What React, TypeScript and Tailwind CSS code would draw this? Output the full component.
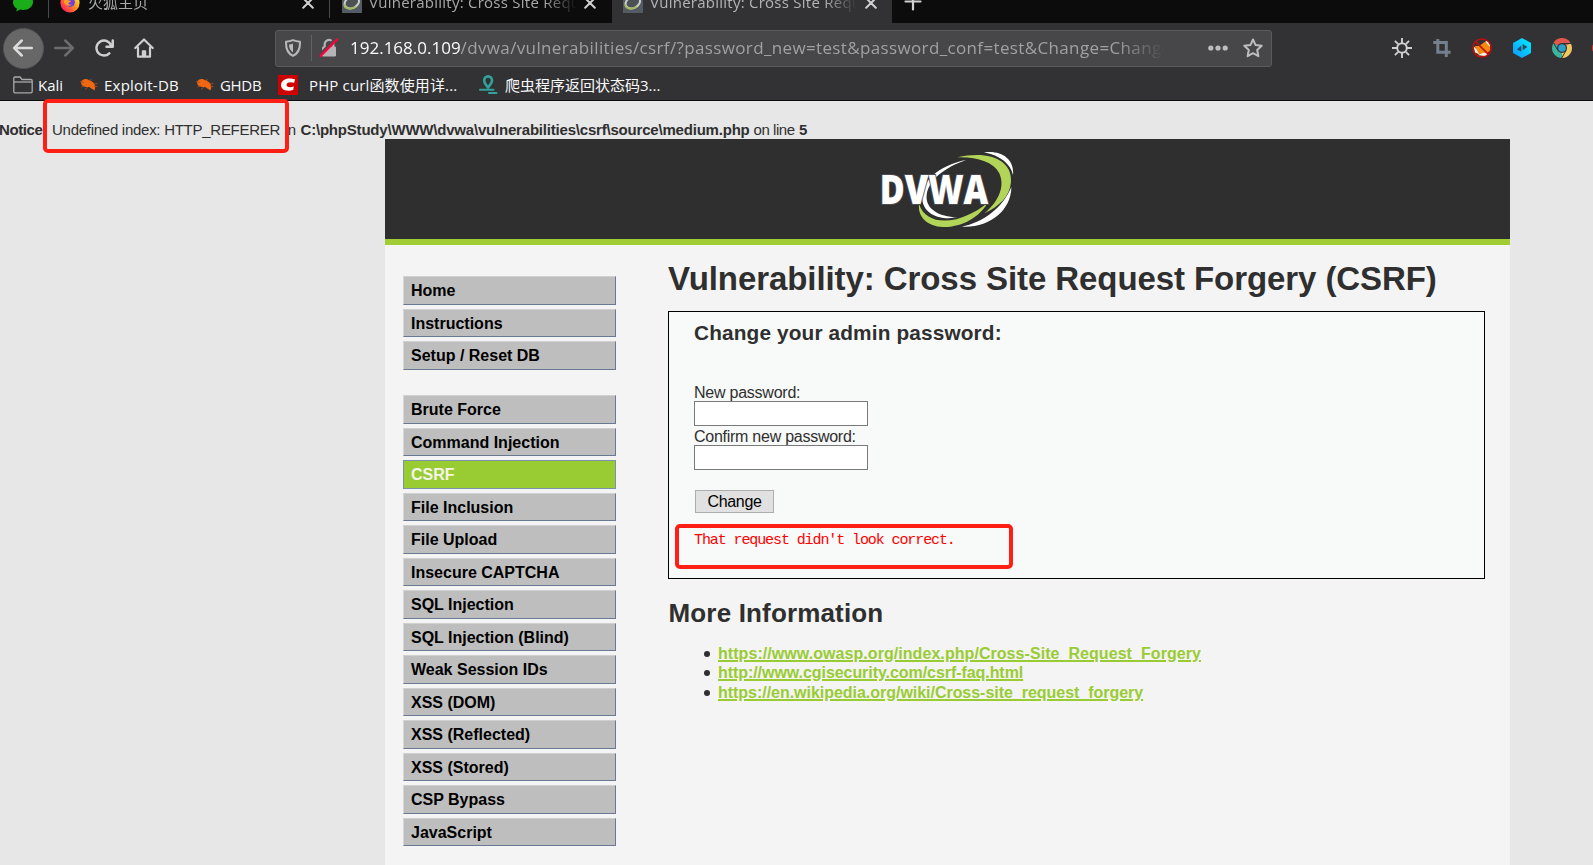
import type { ReactNode } from "react";

const BACK =
  "M15 7H3.414l4.293-4.293a1 1 0 0 0-1.414-1.414l-6 6a1 1 0 0 0 0 1.414l6 6a1 1 0 0 0 1.414-1.414L3.414 9H15a1 1 0 0 0 0-2z";
const RELOAD =
  "M15 1a1 1 0 0 0-1 1v2.418A6.995 6.995 0 1 0 8 15a6.954 6.954 0 0 0 4.95-2.05 1 1 0 0 0-1.414-1.414A5.019 5.019 0 1 1 12.549 6H10a1 1 0 0 0 0 2h5a1 1 0 0 0 1-1V2a1 1 0 0 0-1-1z";

function WeChatIcon() {
  return (
    <svg width="20" height="20" viewBox="0 0 20 20" className="shrink-0">
      <path d="M10 1c5.500 0 10 3.500 10 8s-4.500 8-10 8c-1 0-2-.1-2.900-.4L3.300 18.600l.6-3C1.500 14.200 0 11.900 0 9.200 0 4.700 4.500 1 10 1z" fill="#1aad19" />
    </svg>
  );
}

function FirefoxIcon() {
  return (
    <svg width="20" height="20" viewBox="0 0 20 20" className="shrink-0">
      <defs>
        <linearGradient id="fx" x1="0.9" y1="0.2" x2="0.15" y2="0.9">
          <stop offset="0" stopColor="#ffe226" />
          <stop offset="0.45" stopColor="#ff8a1f" />
          <stop offset="1" stopColor="#ff1f5e" />
        </linearGradient>
      </defs>
      <circle cx="10" cy="10" r="9.600" fill="url(#fx)" />
      <circle cx="10.300" cy="9.300" r="4.600" fill="#6f3fe4" />
      <path d="M4 5c2 0 3.600 1 4.300 2.200 1.200.3 2 .2 2.900.8-.6 1.300-1.900 1.400-2.900 1.900.3 1.500 1.800 2.100 3.700 1.800-2 1.800-6.500 1.300-8-2z" fill="#ff9a22" />
    </svg>
  );
}

function DvwaFavicon() {
  return (
    <svg width="20" height="20" viewBox="0 0 20 20" className="shrink-0">
      <rect width="20" height="20" fill="#545b63" />
      <ellipse cx="10" cy="9.500" rx="7.500" ry="5.500" transform="rotate(-25 10 10)" fill="#4b5154" stroke="#c9cfc9" strokeWidth="2" />
      <path d="M2.300 11.500c.2 5 7 5 11.500 2" fill="none" stroke="#a3b95c" strokeWidth="1.800" />
    </svg>
  );
}

function CloseIcon() {
  return (
    <svg width="12" height="12" viewBox="0 0 12 12" className="shrink-0" stroke="#d0d0d1" strokeWidth="2" strokeLinecap="round">
      <path d="M1.200 1.200l9.600 9.600M10.800 1.200L1.200 10.800" />
    </svg>
  );
}

function TabTitle({ children, className }: { children: ReactNode; className: string }) {
  return (
    <span
      className={
        "mb-[2px] overflow-hidden whitespace-nowrap text-[15px] leading-[22px] [mask-image:linear-gradient(to_right,black_84%,transparent)] " +
        className
      }
    >
      {children}
    </span>
  );
}

function TabBar() {
  return (
    <div className="flex h-[23px] items-end overflow-hidden bg-[#0c0c0c]">
      <div className="flex h-[41px] w-[48px] shrink-0 items-center pl-[13px]">
        <WeChatIcon />
      </div>
      <div className="mb-[5px] h-[36px] w-px shrink-0 bg-[#4a4a4c]" />
      <div className="flex h-[41px] w-[280px] shrink-0 items-center pl-[11px]">
        <FirefoxIcon />
        <TabTitle className="ml-2 w-[214px] text-[#a9a9ab]">火狐主页</TabTitle>
        <CloseIcon />
      </div>
      <div className="mb-[5px] h-[36px] w-px shrink-0 bg-[#4a4a4c]" />
      <div className="flex h-[41px] w-[282px] shrink-0 items-center pl-3">
        <DvwaFavicon />
        <TabTitle className="ml-[7px] mr-[7px] w-[208px] tracking-[0.25px] text-[#a9a9ab]">
          Vulnerability: Cross Site Request Forgery
        </TabTitle>
        <CloseIcon />
      </div>
      <div className="flex h-[41px] w-[280px] shrink-0 items-center bg-[#323234] pl-[11px]">
        <DvwaFavicon />
        <TabTitle className="ml-[7px] mr-[8px] w-[207px] tracking-[0.25px] text-[#b4b4b6]">
          Vulnerability: Cross Site Request Forgery
        </TabTitle>
        <CloseIcon />
      </div>
      <div className="flex h-[41px] items-center pl-3">
        <svg width="18" height="18" viewBox="0 0 18 18" stroke="#d0d0d1" strokeWidth="2.200" strokeLinecap="round">
          <path d="M9 1v14.500M1.500 7.500h15" />
        </svg>
      </div>
    </div>
  );
}

function Toolbar() {
  return (
    <div className="flex h-[50px] items-center">
      <div className="ml-[3px] flex h-[41px] w-[41px] shrink-0 items-center justify-center rounded-full border border-[#555557] bg-[#676768]">
        <svg width="20" height="20" viewBox="0 0 16 16" fill="#dcdcdc" className="-translate-x-px">
          <path d={BACK} />
        </svg>
      </div>
      <svg width="20" height="20" viewBox="0 0 16 16" fill="#6c6c6e" className="ml-[10px] shrink-0 -scale-x-100">
        <path d={BACK} />
      </svg>
      <svg width="20" height="20" viewBox="0 0 16 16" fill="#cfcfd0" className="ml-5 shrink-0">
        <path d={RELOAD} />
      </svg>
      <svg width="20" height="20" viewBox="0 0 20 20" fill="none" stroke="#cfcfd0" strokeWidth="2.200" strokeLinejoin="round" strokeLinecap="round" className="ml-5 shrink-0">
        <path d="M1.300 10L10 1.500 18.700 10M4 9.500v9.200h12V9.500" />
        <path d="M10 18.500v-5M8.600 18.500v-5.400h2.800v5.400" strokeWidth="1.600" />
      </svg>
      <div className="ml-[121px] flex h-[37px] w-[997px] shrink-0 items-center rounded-[3px] border border-[#5a5a5c] bg-[#474749]">
        <svg width="18" height="18" viewBox="0 0 18 18" fill="none" className="ml-2 shrink-0">
          <path d="M9 1.200c2.200 1 4.500 1.400 7 1.500.2 6.500-1.200 11.500-7 14.200C3.200 14.200 1.800 9.200 2 2.700c2.500-.1 4.800-.5 7-1.500z" stroke="#b9b9bb" strokeWidth="2" strokeLinejoin="round" />
          <path d="M9 4.500v9c-3-2-4-4.500-4-7.900 1.500-.2 2.700-.5 4-1.100z" fill="#b9b9bb" />
        </svg>
        <span className="ml-[9px] h-[26px] w-px shrink-0 bg-[#626264]" />
        <svg width="20" height="20" viewBox="0 0 20 20" className="ml-[7px] shrink-0">
          <path d="M5.700 9V6.200a4.300 4.300 0 0 1 8.600 0V9" fill="none" stroke="#b4b4b6" strokeWidth="2.200" />
          <rect x="3" y="8.500" width="14" height="10" rx="1.200" fill="#b4b4b6" />
          <path d="M.5 17L17 .5" stroke="#474749" strokeWidth="3" />
          <path d="M1.500 18L18 1.500" stroke="#ff0039" strokeWidth="2.400" strokeLinecap="round" />
        </svg>
        <div className="ml-[11px] flex w-[815px] shrink-0 overflow-hidden whitespace-nowrap text-[17px] leading-6 [mask-image:linear-gradient(to_right,black_94%,transparent)]">
          <span className="text-[#f9f9fa]">192.168.0.109</span>
          <span className="tracking-[0.36px] text-[#a1a1a3]">
            /dvwa/vulnerabilities/csrf/?password_new=test&amp;password_conf=test&amp;Change=Change
          </span>
        </div>
        <svg width="20" height="6" viewBox="0 0 20 6" fill="#bdbdbf" className="ml-[43px] shrink-0">
          <circle cx="2.800" cy="3" r="2.600" />
          <circle cx="10" cy="3" r="2.600" />
          <circle cx="17.200" cy="3" r="2.600" />
        </svg>
        <svg width="20" height="20" viewBox="0 0 20 20" fill="none" stroke="#bdbdbf" strokeWidth="2" strokeLinejoin="round" className="ml-[15px] shrink-0">
          <path d="M10 1.500l2.600 5.600 6.100.7-4.500 4.200 1.200 6.200L10 15.100l-5.400 3.100 1.200-6.200L1.300 7.800l6.100-.7z" />
        </svg>
      </div>
      <div className="ml-[120px] flex w-[201px] shrink-0 items-center gap-5 overflow-hidden">
        <svg width="20" height="20" viewBox="0 0 20 20" fill="none" stroke="#cfcfd0" className="shrink-0">
          <circle cx="10" cy="10" r="4.800" strokeWidth="2" />
          <path d="M10 0v5M10 15v5M0 10h5M15 10h5M2.900 2.900l3.300 3.300M13.800 13.800l3.300 3.300M17.100 2.900l-3.300 3.300M6.200 13.800l-3.300 3.300" strokeWidth="1.900" />
        </svg>
        <svg width="20" height="20" viewBox="0 0 20 20" fill="none" stroke="#75808e" strokeWidth="3" className="shrink-0">
          <path d="M5.800 1v13.300h12.800M1.300 4.500h13v14.500" />
        </svg>
        <svg width="20" height="20" viewBox="0 0 20 20" className="shrink-0">
          <path d="M3 8l4 0 5-3.500 3-2 3 3 0 7-5 4.500-6 .5-3-4z" fill="#f28a10" />
          <path d="M1.500 8l3.500 4 2 4-4-1.500zM13.500 3.500L16.500 3l1.500 5.500-2.200-1.800z" fill="#f4efe6" />
          <path d="M6.500 17l7 1.200 2.500-2.700-5-.8z" fill="#f4efe6" />
          <circle cx="10" cy="10" r="9.100" fill="none" stroke="#c40d0d" strokeWidth="1.500" />
          <path d="M3.600 3.600l12.800 12.800" stroke="#c40d0d" strokeWidth="1.500" />
        </svg>
        <svg width="20" height="20" viewBox="0 0 20 20" className="shrink-0">
          <defs>
            <linearGradient id="hex" x1="1" y1="0" x2="0" y2="1">
              <stop offset="0" stopColor="#00f0ff" />
              <stop offset="1" stopColor="#1296ff" />
            </linearGradient>
          </defs>
          <path d="M10 0l9 5v10l-9 5-9-5V5z" fill="url(#hex)" />
          <path d="M9.300 7.500v6L4.800 11.500zM10.700 6v6.200L15.400 9z" fill="#2b4a5c" />
        </svg>
        <svg width="20" height="20" viewBox="0 0 20 20" className="shrink-0">
          <path d="M10 10L1.340 5A10 10 0 0 1 18.660 5z" fill="#e2574c" />
          <path d="M10 10L18.660 5A10 10 0 0 1 10 20z" fill="#f0c75e" />
          <path d="M10 10L10 20A10 10 0 0 1 1.340 5z" fill="#3db39e" />
          <path d="M10 5.500h9M14 12.500L9.700 20M6 12.500L1.500 5" stroke="#323234" strokeWidth="1" />
          <circle cx="10" cy="10" r="5" fill="#323234" />
          <circle cx="10" cy="10" r="3.800" fill="#2ba0cc" />
        </svg>
        <span className="h-2 w-[3px] shrink-0 rounded-l-full bg-[#d9342b]" />
      </div>
    </div>
  );
}

function BugIcon() {
  return (
    <svg width="20" height="20" viewBox="0 0 20 20" className="shrink-0">
      <path d="M2 7C3.500 3.500 7.500 3 11 5.500c2 .8 4.500 2.500 5 4.800.5 2 .3 3.800-.8 5.200-1.500-1.800-3.200-1.800-5-3.500C7 12.300 4 11.500 2.500 9.500z" fill="#ef6712" />
      <path d="M1 6.500l4 1M5 11l-2.500 1M9 12l-3 2.500M11.500 6l.5-2M15 9l3.500-.5M15 11.500h3.500" stroke="#a3501f" strokeWidth="0.900" />
    </svg>
  );
}

function Bookmarks() {
  return (
    <div className="flex h-[28px] items-center whitespace-nowrap border-b border-[#0c0c0d] pb-[3px] text-[15px] leading-[22px] text-[#f9f9fa]">
      <svg width="20" height="18" viewBox="0 0 20 18" fill="none" stroke="#a9a9ab" strokeWidth="1.300" className="ml-[13px] shrink-0">
        <path d="M.8 15.500V2.200C.8 1.400 1.300 1 2 1h5l2 2.500h8.800c.8 0 1.400.5 1.400 1.300v10.700c0 .8-.6 1.400-1.400 1.400H2.200c-.8 0-1.400-.6-1.400-1.400z" />
        <path d="M1 6h18" />
      </svg>
      <span className="ml-[5px] w-[41px]">Kali</span>
      <BugIcon />
      <span className="ml-[5px] w-[91px] tracking-[0.22px]">Exploit-DB</span>
      <BugIcon />
      <span className="ml-[5px] w-[58px] tracking-[-0.3px]">GHDB</span>
      <svg width="20" height="20" viewBox="0 0 20 20" className="shrink-0">
        <rect width="20" height="20" fill="#ce0000" />
        <path d="M17 4.300c-6-2-12.500-.6-13.800 4.400-1.300 5.300 4.300 8.500 12 6.300l.6-3.400c-4.200 1.300-7.600.6-7.200-2.100.4-2.500 4-2.900 7.600-1.700z" fill="#fff" />
      </svg>
      <span className="ml-[11px] w-[170px] tracking-[0.14px]">PHP curl函数使用详...</span>
      <svg width="20" height="20" viewBox="0 0 20 20" fill="none" stroke="#2fa39b" className="shrink-0">
        <path d="M9 12.500C6.800 10 5.200 8 5.200 5.300a3.900 3.900 0 0 1 7.800 0C13 8 11.200 10 9 12.500z" strokeWidth="2.600" />
        <path d="M1 14.800h13.500M10 18h7.500" strokeWidth="2" strokeLinecap="round" />
      </svg>
      <span className="ml-[6px]">爬虫程序返回状态码3...</span>
    </div>
  );
}

function DvwaLogo() {
  return (
    <svg width="135" height="78" viewBox="120 45 405 234">
      <path d="M432 52c54-8 92 22 87 68-8-34-38-58-87-68z" fill="#fff" />
      <path d="M514 156c0 70-66 124-149 119 62-12 124-56 149-119z" fill="#fff" />
      <path d="M378 75c-62 22-112 58-118 104-5 42 36 66 92 68-52 10-106-10-106-62 2-58 68-98 132-110z" fill="#fff" />
      <path d="M352 67c94-22 166 8 161 74-4 44-34 72-80 94 48-40 62-86 44-122-18-32-66-48-125-46z" fill="#b2d458" />
      <path d="M237 207c18 56 86 62 148 32 26-12 46-24 62-42-28 52-84 80-138 79-46-2-76-28-72-69z" fill="#b2d458" />
      <text
        x="119"
        y="207"
        textLength="326"
        lengthAdjust="spacingAndGlyphs"
        className="fill-white stroke-[#4a4a50] font-['Open_Sans',sans-serif] text-[124px] font-extrabold [paint-order:stroke] [stroke-width:6px]"
      >
        DVWA
      </text>
    </svg>
  );
}

function MenuItem({ label, active }: { label: string; active?: boolean }) {
  return (
    <li
      className={
        active
          ? "flex h-[28.5px] items-center border border-[#7a92ae] bg-[#99cc33] pl-[7px] pt-[1.6px] text-[#f4f4e8]"
          : "flex h-[28.5px] items-center border border-b-[#6b7891] border-l-[#d6d6d6] border-r-[#6b7891] border-t-[#d0d0d0] bg-[#bebebe] pl-[7px] pt-[1.6px] text-black"
      }
    >
      {label}
    </li>
  );
}

const SETUP = ["Home", "Instructions", "Setup / Reset DB"];
const MODULES = [
  "Brute Force",
  "Command Injection",
  "CSRF",
  "File Inclusion",
  "File Upload",
  "Insecure CAPTCHA",
  "SQL Injection",
  "SQL Injection (Blind)",
  "Weak Session IDs",
  "XSS (DOM)",
  "XSS (Reflected)",
  "XSS (Stored)",
  "CSP Bypass",
  "JavaScript",
];

function Bullet({ children, className }: { children: string; className: string }) {
  return (
    <li className="flex h-[19.5px] items-center">
      <span className="mr-2 size-[6px] rounded-full bg-[#2f2f2f]" />
      <a className={"whitespace-nowrap font-bold text-[#99cc33] underline decoration-2 underline-offset-1 " + className}>{children}</a>
    </li>
  );
}

export default function App() {
  return (
    <div className="relative flex h-[865px] w-[1593px] flex-col overflow-hidden bg-[#e7e7e7] font-['Liberation_Sans',Arial,sans-serif] text-[16px] text-[#2f2f2f]">
      <header className="bg-[#323234] font-['Open_Sans','Noto_Sans_CJK_SC',sans-serif]">
        <TabBar />
        <Toolbar />
        <Bookmarks />
      </header>

      <div className="flex h-[38px] shrink-0 whitespace-nowrap pt-[19px] text-[15px] leading-5">
        <b className="-ml-px w-[53px] shrink-0 tracking-[-0.4px]">Notice:</b>
        <span className="w-[232.500px] shrink-0 tracking-[-0.27px]">Undefined index: HTTP_REFERER</span>
        <span className="w-4 shrink-0">in</span>
        <b className="w-[453px] shrink-0 tracking-[-0.2px]">C:\phpStudy\WWW\dvwa\vulnerabilities\csrf\source\medium.php</b>
        <span className="w-[45.500px] shrink-0 tracking-[-0.45px]">on line</span>
        <b>5</b>
      </div>

      <div className="ml-[385px] flex w-[1125px] grow flex-col bg-[#f4f4f4]">
        <div className="flex h-[106px] shrink-0 justify-center border-b-[6px] border-[#a1cc33] bg-[#2f2f2f] pt-[11px]">
          <DvwaLogo />
        </div>
        <div className="flex">
          <nav className="ml-[18px] flex w-[213px] flex-col gap-[25.600px] pt-[31px] font-bold leading-5">
            <ul className="flex flex-col gap-1">
              {SETUP.map((s) => (
                <MenuItem key={s} label={s} />
              ))}
            </ul>
            <ul className="flex flex-col gap-1">
              {MODULES.map((s) => (
                <MenuItem key={s} label={s} active={s === "CSRF"} />
              ))}
            </ul>
          </nav>
          <main className="ml-[52px] w-[817px] pt-[14px]">
            <h1 className="whitespace-nowrap text-[33px] font-bold leading-10 tracking-[-0.08px]">
              Vulnerability: Cross Site Request Forgery (CSRF)
            </h1>
            <section className="mt-3 h-[268px] border border-black bg-[#f8faf9] pl-[25px] pt-[9px]">
              <h3 className="text-[20.800px] font-bold leading-6 tracking-[0.14px]">Change your admin password:</h3>
              <div className="mt-[37px] pt-px leading-[20px] tracking-[-0.24px]">New password:</div>
              <input className="-mt-[2px] block h-[25px] w-[174px] border border-[#7a7a7a] bg-white" />
              <div className="mt-px leading-[20px] tracking-[-0.26px]">Confirm new password:</div>
              <input className="-mt-[2px] block h-[25px] w-[174px] border border-[#7a7a7a] bg-white" />
              <button className="ml-px mt-5 flex h-[23px] w-[79px] items-center justify-center border border-[#adadad] bg-[#e1e1e1] leading-5 tracking-[-0.3px] text-black">
                Change
              </button>
              <pre className="mt-[18px] font-['Liberation_Mono',monospace] text-[15px] leading-5 tracking-[-1.100px] text-[#ff0000]">
                That request didn't look correct.
              </pre>
            </section>
            <h2 className="mt-[19px] pl-[0.5px] text-[26px] font-bold leading-[30px] tracking-[0.16px]">More Information</h2>
            <ul className="mt-[16px] pl-[36px]">
              <Bullet className="tracking-[0.06px]">https://www.owasp.org/index.php/Cross-Site_Request_Forgery</Bullet>
              <Bullet className="tracking-[-0.06px]">http://www.cgisecurity.com/csrf-faq.html</Bullet>
              <Bullet className="tracking-[-0.03px]">https://en.wikipedia.org/wiki/Cross-site_request_forgery</Bullet>
            </ul>
          </main>
        </div>
      </div>

      <div className="absolute left-[43px] top-[99px] h-[54px] w-[246px] rounded-[5px] border-4 border-[#ff1f14]" />
      <div className="absolute left-[675px] top-[524px] h-[45px] w-[338px] rounded-[5px] border-[4.500px] border-[#ff1f14]" />
    </div>
  );
}
